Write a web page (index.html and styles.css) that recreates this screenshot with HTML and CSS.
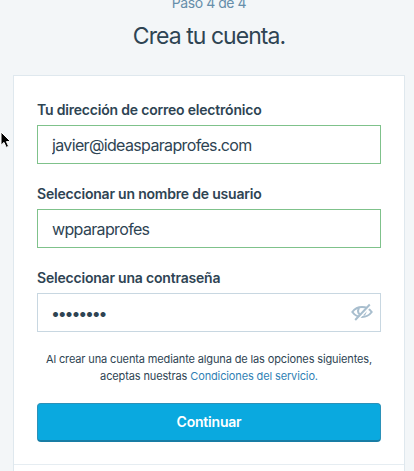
FILE: index.html
```html
<!DOCTYPE html>
<html lang="es">
<head>
  <meta charset="UTF-8">
  <meta name="viewport" content="width=device-width, initial-scale=1" />
  <title>Crea tu cuenta</title>
  <link rel="stylesheet" href="styles.css">
</head>
<body>
  <header class="step-header">
    <p class="step">Paso 4 de 4</p>
    <h1>Crea tu cuenta.</h1>
  </header>

  <form class="card">
    <div class="fields">
      <div class="field">
        <label for="email">Tu dirección de correo electrónico</label>
        <input class="valid" type="text" id="email" value="javier@ideasparaprofes.com" spellcheck="false">
      </div>
      <div class="field">
        <label for="username">Seleccionar un nombre de usuario</label>
        <input class="valid" type="text" id="username" value="wpparaprofes" spellcheck="false">
      </div>
      <div class="field">
        <label for="password">Seleccionar una contraseña</label>
        <div class="password-box">
          <input class="password" type="text" id="password" value="••••••••">
          <svg class="eye" viewBox="0 0 22 18" width="22" height="18">
            <path d="M1.3 9Q5 4 11 4T20.7 9Q17 14 11 14T1.3 9Z" />
            <path d="M8.1 5Q5.8 8.6 8.6 11.4M14.2 6.8Q15.4 9.5 12.4 12.2" />
            <path class="gap" d="M5.9 17.4L20.1 2.4" />
            <path d="M4.2 17L18.8 1.5" />
          </svg>
        </div>
      </div>

      <p class="terms">
        Al crear una cuenta mediante alguna de las opciones siguientes,<br>
        aceptas nuestras <a href="#">Condiciones del servicio.</a>
      </p>

      <button type="button">Continuar</button>
    </div>
    <div class="card-footer"></div>
  </form>

  <svg class="cursor" viewBox="0 0 12 18" width="12" height="18">
    <path d="M1 1V14.2L4 11.4L6.2 16.4L8.6 15.3L6.4 10.6H10.6Z" />
  </svg>
</body>
</html>
```

FILE: styles.css
```css
* {
  box-sizing: border-box;
}

body {
  margin: 0;
  background: #f3f6f8;
  color: #2e4453;
  font-family: Inter, "Liberation Sans", sans-serif;
}

.step-header {
  height: 75px;
  padding-left: 4px;
  overflow: hidden;
  text-align: center;
}

.step {
  margin: -7px 0 0;
  font-size: 14px;
  line-height: 20px;
  letter-spacing: -0.45px;
  color: #668eaa;
}

h1 {
  margin: 7px 0 0;
  font-size: 23px;
  font-weight: 400;
  line-height: 32px;
  letter-spacing: -0.95px;
}

.card {
  width: 392px;
  height: 396px;
  margin-left: 13px;
  background: #fff;
  border: 1px solid #dfe8ee;
  border-bottom: 0;
}

.fields {
  padding: 24px 23px 22px;
}

.field {
  margin-bottom: 20px;
}

label {
  display: block;
  height: 20px;
  margin-bottom: 5px;
  font-size: 14px;
  font-weight: 600;
  line-height: 20px;
  letter-spacing: -0.2px;
}

input {
  display: block;
  width: 100%;
  height: 39px;
  padding: 0 14px;
  border: 1px solid #c8d7e1;
  border-radius: 0;
  background: #fff;
  color: #2e4453;
  font-family: inherit;
  font-size: 16px;
  letter-spacing: -0.65px;
  outline: none;
}

.valid {
  border-color: #7fc28b;
}

.password-box {
  position: relative;
}

.password {
  padding-left: 13px;
  letter-spacing: -2.2px;
}

.eye {
  position: absolute;
  top: 10px;
  right: 8px;
  fill: none;
  stroke: #a8bece;
  stroke-width: 2;
}

.eye .gap {
  stroke: #fff;
}

.terms {
  margin: -1px 0 18px;
  font-size: 11px;
  line-height: 17px;
  letter-spacing: -0.13px;
  text-align: center;
}

.terms a {
  color: #2f7fb5;
  text-decoration: none;
}

button {
  display: block;
  width: 100%;
  height: 39px;
  padding: 0 0 1px;
  border: 1px solid #2b91b8;
  border-bottom: 2px solid #187da5;
  border-radius: 4px;
  background: #0aa9df;
  color: #fff;
  font-family: inherit;
  font-size: 14px;
  font-weight: 600;
  letter-spacing: -0.2px;
}

.card-footer {
  border-top: 1px solid #e6edf2;
}

/* mouse pointer over the page */
.cursor {
  position: absolute;
  top: 131px;
  left: 0;
  fill: #000;
  stroke: #fff;
  stroke-width: 1;
}
```
